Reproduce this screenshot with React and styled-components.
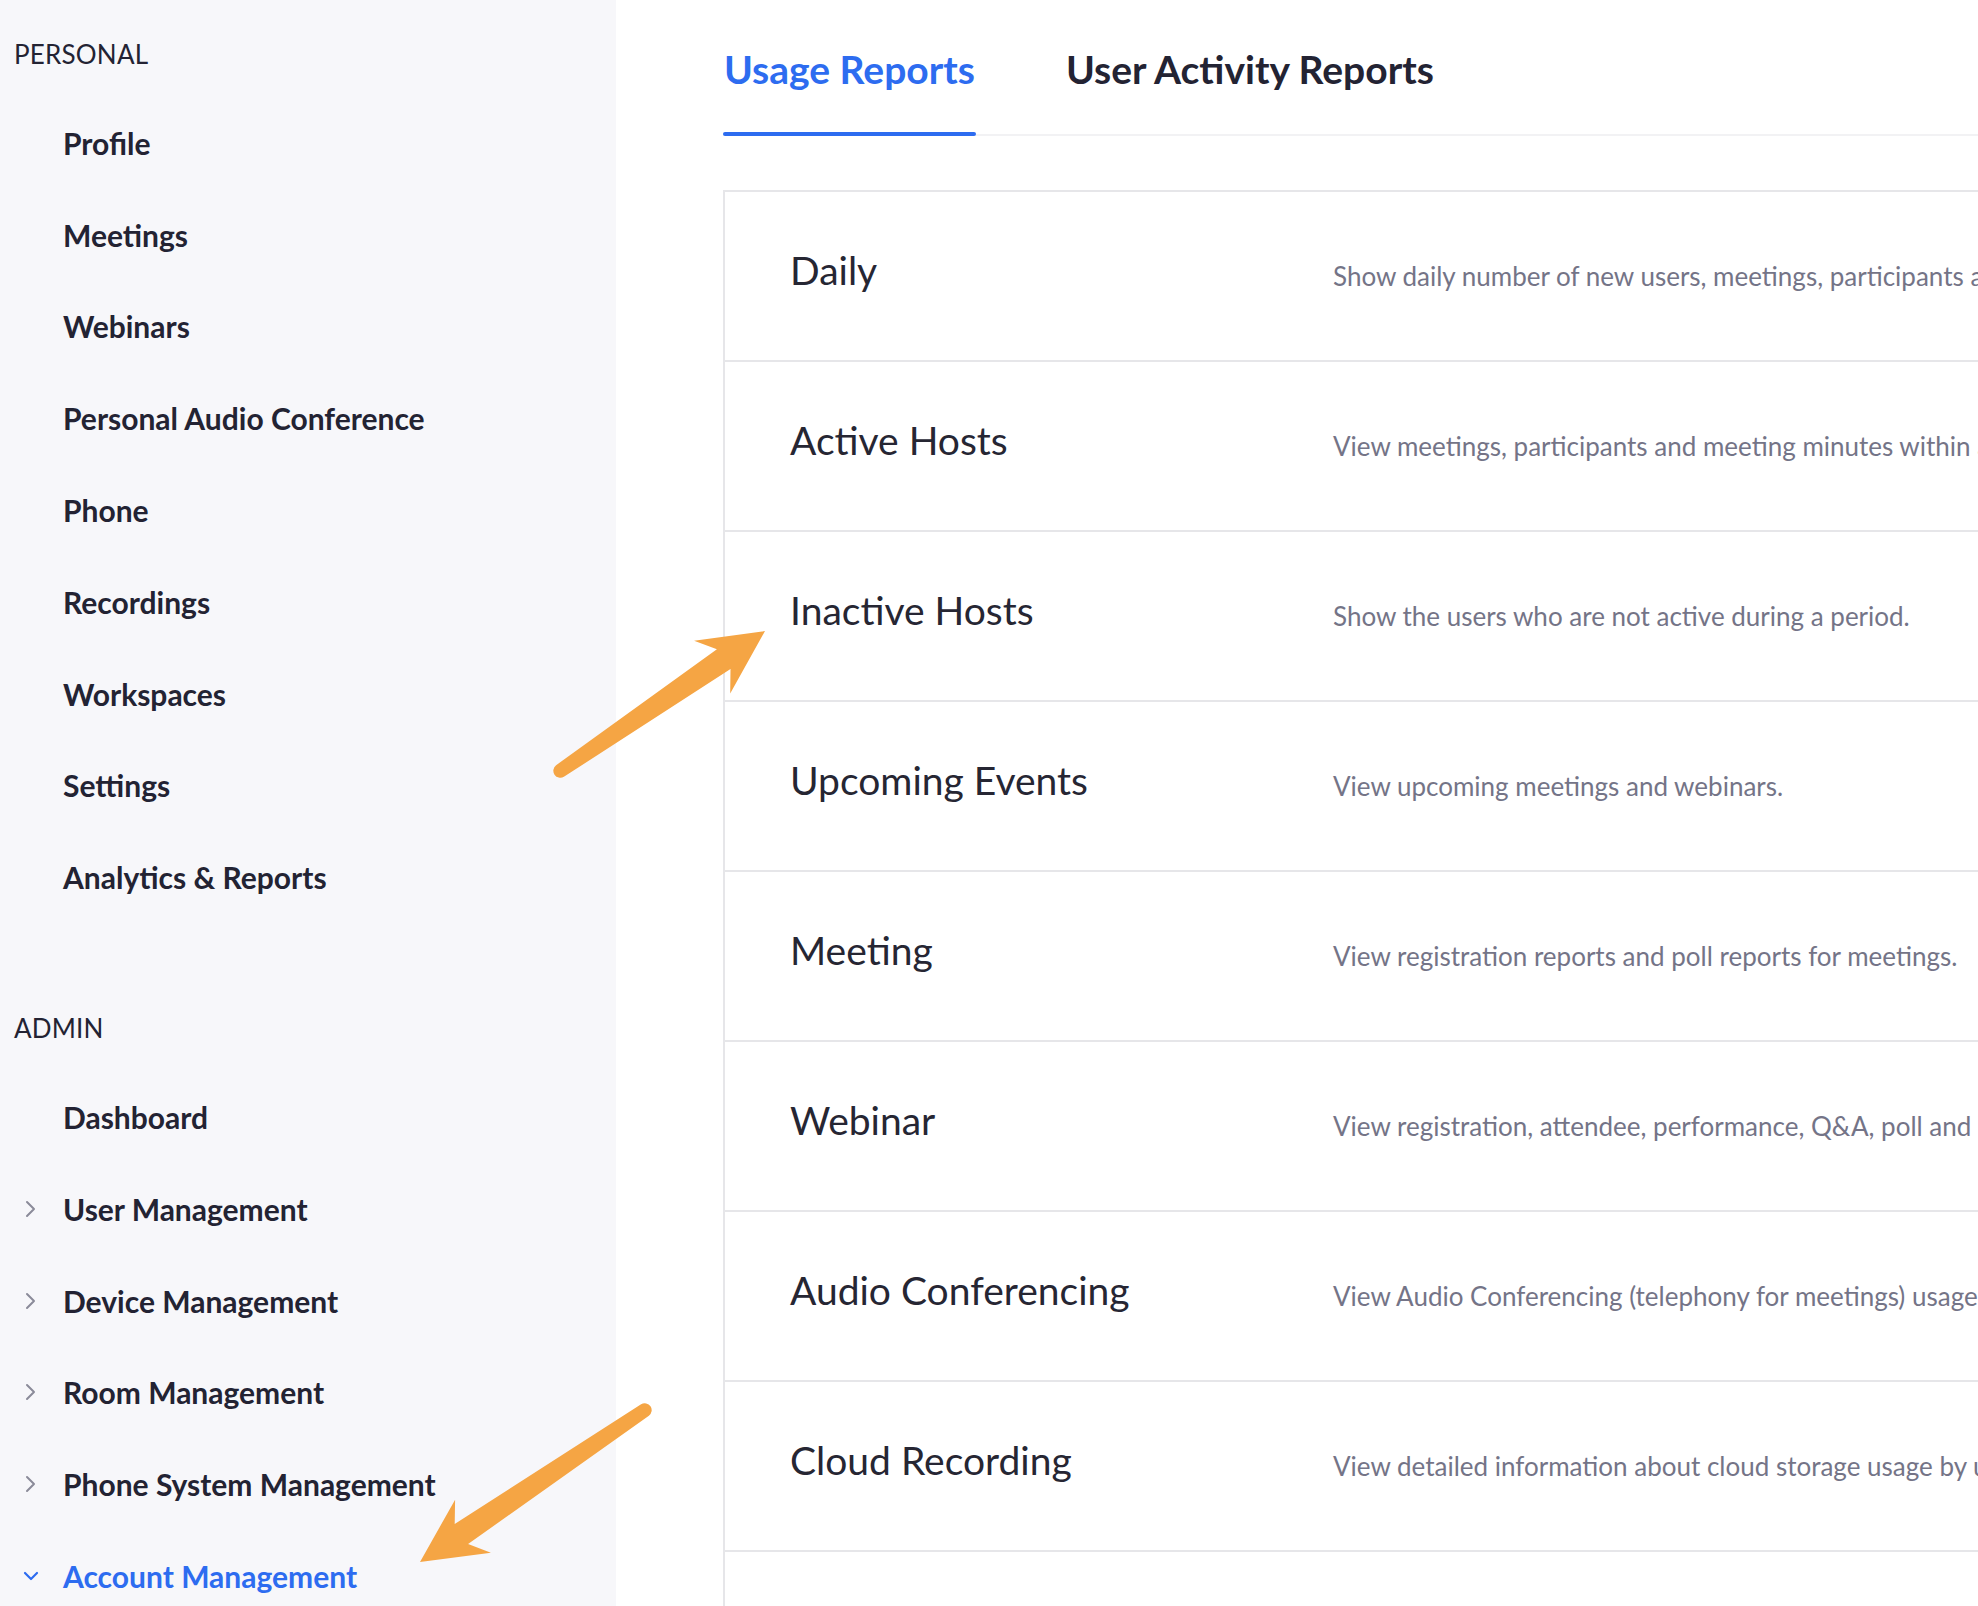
import React from 'react';
import styled, { createGlobalStyle } from 'styled-components';

const GlobalStyle = createGlobalStyle`
	html, body {
		margin: 0;
		padding: 0;
		background: #ffffff;
	}
	body {
		font-family: Lato, 'Open Sans', 'Liberation Sans', sans-serif;
		overflow: hidden;
	}
`;

const Page = styled.div`
	position: relative;
	display: flex;
	width: 1978px;
	height: 1606px;
	overflow: hidden;
	background: #fff;
`;

const Sidebar = styled.nav`
	flex: 0 0 616px;
	background: #f7f7fa;
	padding-top: 24px;
	box-sizing: border-box;
`;

const Section = styled.div`
	margin-bottom: 75px;
`;

const SectionTitle = styled.div`
	height: 60px;
	display: flex;
	align-items: center;
	padding-left: 14px;
	margin-bottom: 13px;
	font-size: 26px;
	font-weight: 400;
	color: #232333;
	letter-spacing: 0.2px;
`;

const NavItem = styled.div`
	display: flex;
	align-items: center;
	height: 91.8px;
	font-size: 30px;
	font-weight: 700;
	color: ${({ active }) => (active ? '#2d6cf0' : '#232333')};
`;

const IconSlot = styled.span`
	display: flex;
	align-items: center;
	width: 63px;
	padding-left: ${({ down }) => (down ? '22px' : '25px')};
	box-sizing: border-box;
`;

const Main = styled.main`
	flex: 1;
	padding-left: 107px;
	min-width: 0;
`;

const TabBar = styled.div`
	display: flex;
	gap: 89px;
	width: 1600px;
	border-bottom: 2px solid #f2f2f4;
`;

const Tab = styled.div`
	position: relative;
	padding: 45px 1px 0;
	height: 134px;
	box-sizing: border-box;
	font-size: 39px;
	font-weight: 700;
	line-height: 48px;
	color: ${({ active }) => (active ? '#2d6cf0' : '#232333')};
	white-space: nowrap;

	&::after {
		content: '';
		position: absolute;
		left: 0;
		right: 0;
		bottom: -2px;
		height: 4px;
		background: ${({ active }) => (active ? '#2d6cf0' : 'transparent')};
		border-radius: 2px;
	}
`;

const Card = styled.div`
	margin-top: 54px;
	width: 1600px;
	border-top: 2px solid #e6e6e9;
	border-left: 2px solid #e6e6e9;
`;

const Row = styled.div`
	display: grid;
	grid-template-columns: 543px 1fr;
	align-items: center;
	height: 170px;
	padding-left: 65px;
	border-bottom: 2px solid #e6e6e9;
	box-sizing: border-box;
	white-space: nowrap;
`;

const RowTitle = styled.div`
	font-size: 39px;
	font-weight: 400;
	color: #262633;
	margin-top: -13px;
`;

const RowText = styled.div`
	font-size: 26px;
	color: #747487;
`;

const Overlay = styled.svg`
	position: absolute;
	left: 0;
	top: 0;
	pointer-events: none;
`;

const ChevronRight = () => (
	<svg width="12" height="18" viewBox="0 0 12 18">
		<polyline points="2,2 9,9 2,16" fill="none" stroke="#8b8b99" strokeWidth="2" strokeLinecap="round" strokeLinejoin="round" />
	</svg>
);

const ChevronDown = () => (
	<svg width="18" height="12" viewBox="0 0 18 12">
		<polyline points="3,3 9,9 15,3" fill="none" stroke="#2d6cf0" strokeWidth="2.2" strokeLinecap="round" strokeLinejoin="round" />
	</svg>
);

const personal = [
	'Profile',
	'Meetings',
	'Webinars',
	'Personal Audio Conference',
	'Phone',
	'Recordings',
	'Workspaces',
	'Settings',
	'Analytics & Reports',
];

const admin = [
	{ label: 'Dashboard' },
	{ label: 'User Management', icon: 'right' },
	{ label: 'Device Management', icon: 'right' },
	{ label: 'Room Management', icon: 'right' },
	{ label: 'Phone System Management', icon: 'right' },
	{ label: 'Account Management', icon: 'down', active: true },
];

const reports = [
	['Daily', 'Show daily number of new users, meetings, participants and meeting minutes.'],
	['Active Hosts', 'View meetings, participants and meeting minutes within a specified time range.'],
	['Inactive Hosts', 'Show the users who are not active during a period.'],
	['Upcoming Events', 'View upcoming meetings and webinars.'],
	['Meeting', 'View registration reports and poll reports for meetings.'],
	['Webinar', 'View registration, attendee, performance, Q&A, poll and survey reports for webinars.'],
	['Audio Conferencing', 'View Audio Conferencing (telephony for meetings) usage reports.'],
	['Cloud Recording', 'View detailed information about cloud storage usage by users.'],
	['', ''],
];

// tapered callout arrow, tail -> tip
const arrowPath = (tx, ty, hx, hy) => {
	const len = Math.hypot(hx - tx, hy - ty);
	const ux = (hx - tx) / len;
	const uy = (hy - ty) / len;
	const nx = -uy;
	const ny = ux;
	const p = (d, w) => `${(hx - ux * d + nx * w).toFixed(1)},${(hy - uy * d + ny * w).toFixed(1)}`;
	const t = (w) => `${(tx + nx * w).toFixed(1)},${(ty + ny * w).toFixed(1)}`;
	return `M${hx},${hy} L${p(64, 32)} L${p(50, 12)} L${t(7)} A7 7 0 0 1 ${t(-7)} L${p(50, -12)} L${p(64, -32)} Z`;
};

const App = () => (
	<>
		<GlobalStyle />
		<Page>
			<Sidebar>
				<Section>
					<SectionTitle>PERSONAL</SectionTitle>
					{personal.map((label) => (
						<NavItem key={label}>
							<IconSlot />
							{label}
						</NavItem>
					))}
				</Section>
				<Section>
					<SectionTitle>ADMIN</SectionTitle>
					{admin.map(({ label, icon, active }) => (
						<NavItem key={label} active={active}>
							<IconSlot down={icon === 'down'}>
								{icon === 'right' && <ChevronRight />}
								{icon === 'down' && <ChevronDown />}
							</IconSlot>
							{label}
						</NavItem>
					))}
				</Section>
			</Sidebar>
			<Main>
				<TabBar>
					<Tab active>Usage Reports</Tab>
					<Tab>User Activity Reports</Tab>
				</TabBar>
				<Card>
					{reports.map(([title, text], i) => (
						<Row key={i}>
							<RowTitle>{title}</RowTitle>
							<RowText>{text}</RowText>
						</Row>
					))}
				</Card>
			</Main>
			<Overlay width="1978" height="1606" viewBox="0 0 1978 1606">
				<path d={arrowPath(560, 771, 765, 631)} fill="#f5a544" />
				<path d={arrowPath(645, 1410, 420, 1562)} fill="#f5a544" />
			</Overlay>
		</Page>
	</>
);

export default App;
